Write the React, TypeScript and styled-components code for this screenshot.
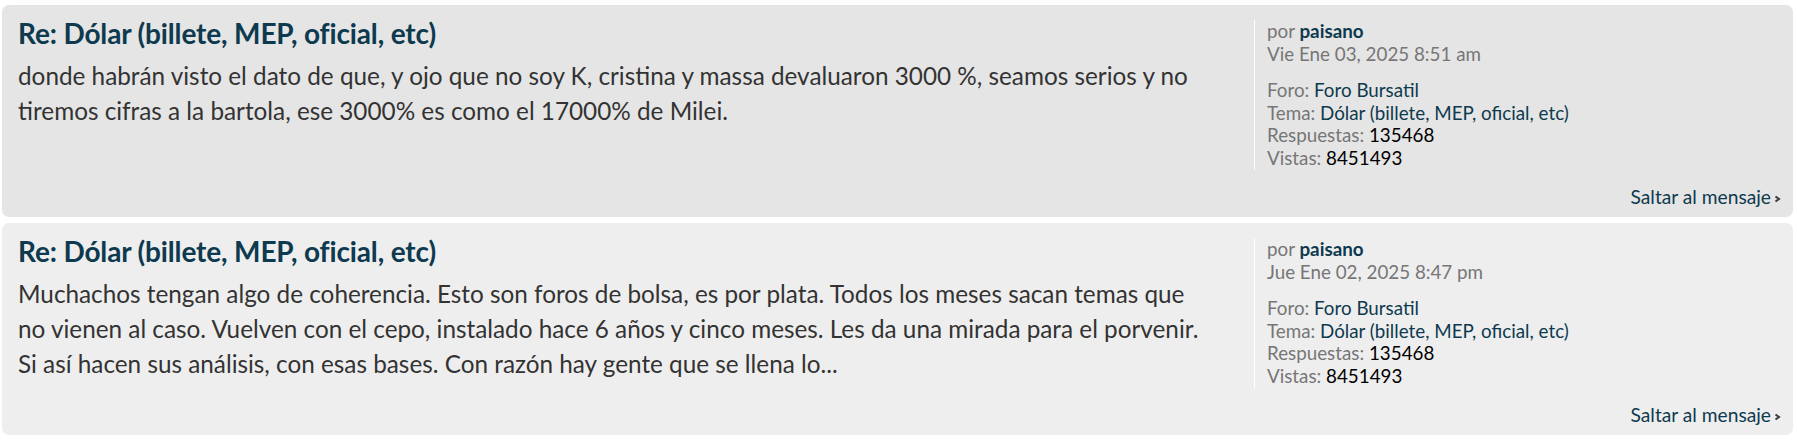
import React from 'react';
import styled, { createGlobalStyle } from 'styled-components';

const GlobalStyle = createGlobalStyle`
  body {
    margin: 0;
    background: #ffffff;
    font-family: Lato, "Open Sans", sans-serif;
  }
`;

type Post = {
  title: string;
  body: string;
  author: string;
  date: string;
  forum: string;
  topic: string;
  replies: string;
  views: string;
};

const posts: Post[] = [
  {
    title: 'Re: Dólar (billete, MEP, oficial, etc)',
    body: 'donde habrán visto el dato de que, y ojo que no soy K, cristina y massa devaluaron 3000 %, seamos serios y no tiremos cifras a la bartola, ese 3000% es como el 17000% de Milei.',
    author: 'paisano',
    date: 'Vie Ene 03, 2025 8:51 am',
    forum: 'Foro Bursatil',
    topic: 'Dólar (billete, MEP, oficial, etc)',
    replies: '135468',
    views: '8451493',
  },
  {
    title: 'Re: Dólar (billete, MEP, oficial, etc)',
    body: 'Muchachos tengan algo de coherencia. Esto son foros de bolsa, es por plata. Todos los meses sacan temas que no vienen al caso. Vuelven con el cepo, instalado hace 6 años y cinco meses. Les da una mirada para el porvenir. Si así hacen sus análisis, con esas bases. Con razón hay gente que se llena lo...',
    author: 'paisano',
    date: 'Jue Ene 02, 2025 8:47 pm',
    forum: 'Foro Bursatil',
    topic: 'Dólar (billete, MEP, oficial, etc)',
    replies: '135468',
    views: '8451493',
  },
];

export default function App() {
  return (
    <>
      <GlobalStyle />
      <List>
        {posts.map((p, i) => (
          <Panel key={i} alt={i % 2 === 1}>
            <Main>
              <Title href="#">{p.title}</Title>
              <Body>{p.body}</Body>
            </Main>
            <Profile>
              <Line>
                <Label>por </Label>
                <Author href="#">{p.author}</Author>
              </Line>
              <Line>
                <Label>{p.date}</Label>
              </Line>
              <Stats>
                <Line>
                  <Label>Foro: </Label>
                  <Link href="#">{p.forum}</Link>
                </Line>
                <Line>
                  <Label>Tema: </Label>
                  <Link href="#">{p.topic}</Link>
                </Line>
                <Line>
                  <Label>Respuestas: </Label>
                  <Value>{p.replies}</Value>
                </Line>
                <Line>
                  <Label>Vistas: </Label>
                  <Value>{p.views}</Value>
                </Line>
              </Stats>
            </Profile>
            <Footer>
              <Jump href="#">
                Saltar al mensaje
                <svg width="7" height="8" viewBox="0 0 7 8">
                  <path d="M1.5 1.5 L5 4 L1.5 6.5" fill="none" stroke="#3a3a3a" strokeWidth="2" />
                </svg>
              </Jump>
            </Footer>
          </Panel>
        ))}
      </List>
    </>
  );
}

const List = styled.div`
  display: flex;
  flex-direction: column;
  gap: 6px;
  padding: 5px 4px 5px 2px;
`;

const Panel = styled.div<{ alt: boolean }>`
  display: grid;
  grid-template-columns: 1fr 523px;
  column-gap: 44px;
  background: ${({ alt }) => (alt ? '#eeeeee' : '#e5e5e5')};
  border-radius: 7px;
  padding: 15px 16px 9px 16px;
`;

const Main = styled.div`
  display: flex;
  flex-direction: column;
`;

const Title = styled.a`
  font-size: 28px;
  line-height: 26px;
  font-weight: 700;
  color: #0d3a4e;
  text-decoration: none;
  letter-spacing: -0.15px;
`;

const Body = styled.div`
  margin-top: 12px;
  font-size: 24.3px;
  line-height: 35px;
  color: #333333;
`;

const Profile = styled.div`
  border-left: 1px solid #ffffff;
  padding-left: 12px;
  display: flex;
  flex-direction: column;
  min-height: 150px;
`;

const Stats = styled.div`
  margin-top: 14px;
`;

const Line = styled.div`
  font-size: 18.8px;
  line-height: 22.5px;
`;

const Label = styled.span`
  color: #767676;
`;

const Author = styled.a`
  color: #0d3a4e;
  font-weight: 700;
  text-decoration: none;
`;

const Link = styled.a`
  color: #0d3a4e;
  text-decoration: none;
`;

const Value = styled.span`
  color: #000000;
`;

const Footer = styled.div`
  grid-column: 1 / -1;
  display: flex;
  justify-content: flex-end;
  margin-top: 16px;
`;

const Jump = styled.a`
  display: inline-flex;
  align-items: center;
  gap: 3px;
  font-size: 19.2px;
  line-height: 22px;
  color: #0d3a4e;
  text-decoration: none;
  margin-right: -4px;

  svg {
    margin-top: 3px;
  }
`;
